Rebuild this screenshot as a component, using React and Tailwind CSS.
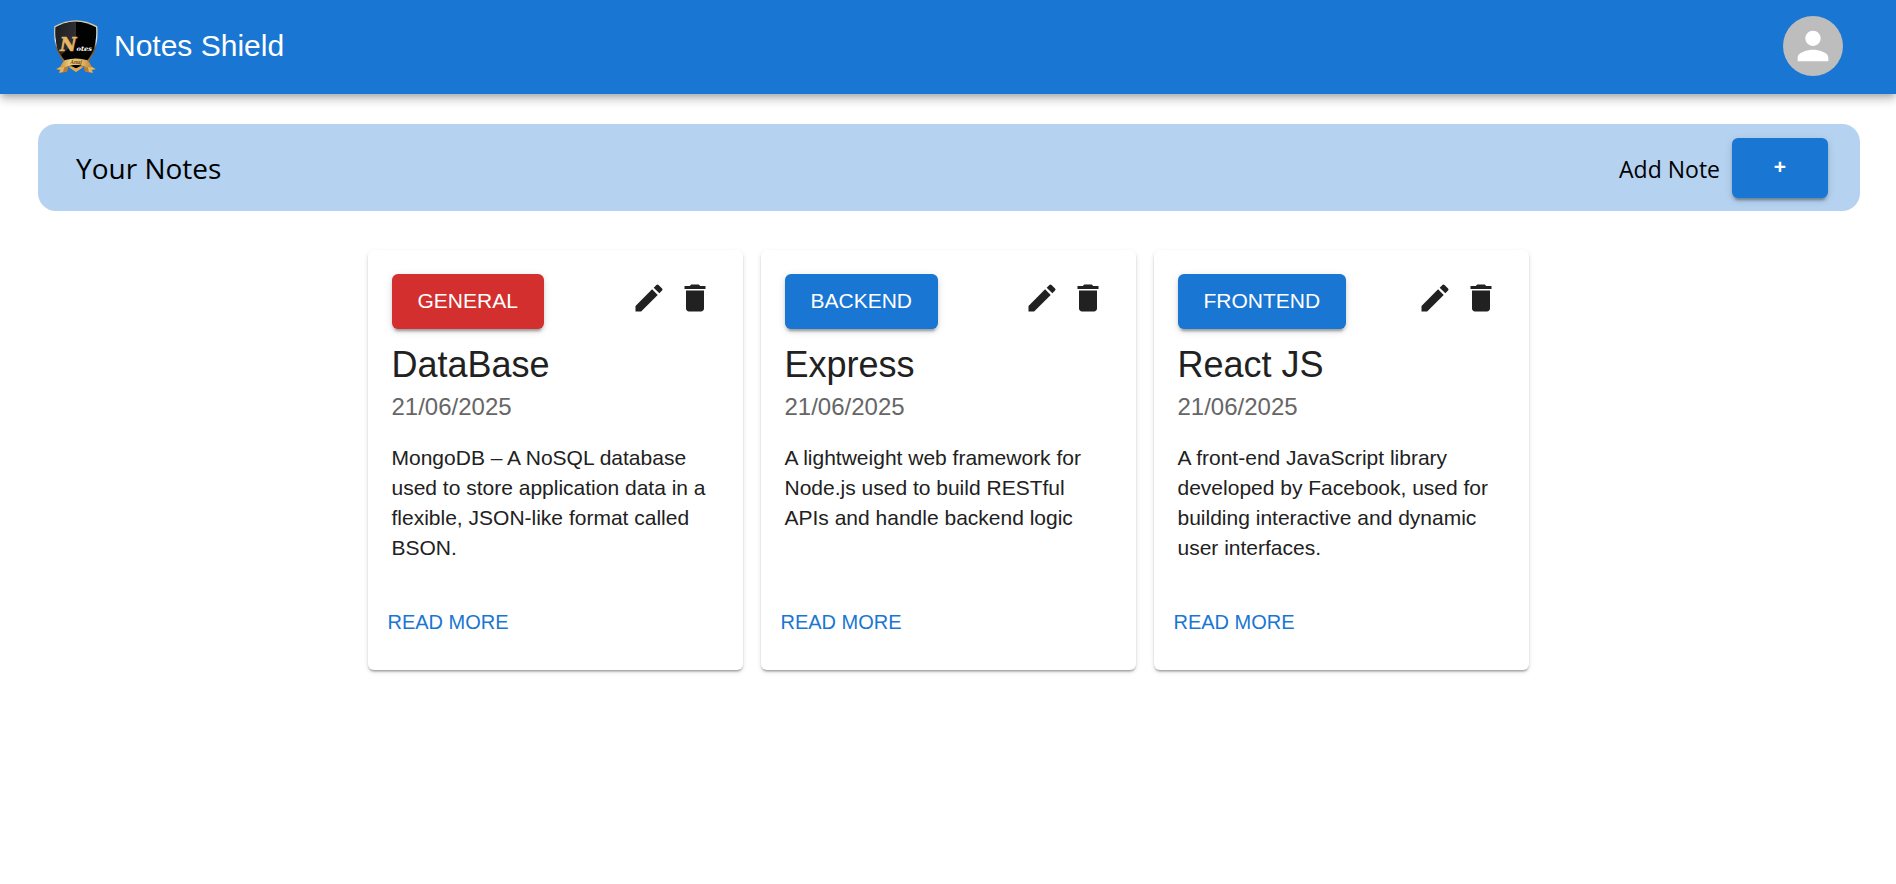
import { MdDelete, MdEdit, MdPerson } from "react-icons/md";

const notes = [
  {
    category: "GENERAL",
    color: "bg-[#d32f2f]",
    title: "DataBase",
    date: "21/06/2025",
    body: "MongoDB – A NoSQL database used to store application data in a flexible, JSON-like format called BSON.",
  },
  {
    category: "BACKEND",
    color: "bg-[#1976d2]",
    title: "Express",
    date: "21/06/2025",
    body: "A lightweight web framework for Node.js used to build RESTful APIs and handle backend logic",
  },
  {
    category: "FRONTEND",
    color: "bg-[#1976d2]",
    title: "React JS",
    date: "21/06/2025",
    body: "A front-end JavaScript library developed by Facebook, used for building interactive and dynamic user interfaces.",
  },
];

const raised =
  "rounded-md pb-[2px] text-[21px] text-white shadow-[0_5px_2px_-3px_rgba(0,0,0,0.2),0_3px_3px_0_rgba(0,0,0,0.14),0_2px_8px_0_rgba(0,0,0,0.12)]";

function Logo() {
  return (
    <svg viewBox="24 18 138 168" className="h-14 w-[46px] shrink-0" aria-hidden="true">
      <defs>
        <linearGradient id="rim" x1="0" y1="0" x2="0" y2="1">
          <stop offset="0" stopColor="#cfc6a4" />
          <stop offset="0.4" stopColor="#dfe3e2" />
          <stop offset="0.55" stopColor="#6b4a1c" />
          <stop offset="1" stopColor="#c98f3c" />
        </linearGradient>
        <linearGradient id="sheen" x1="0" y1="0" x2="1" y2="0.3">
          <stop offset="0" stopColor="#1d1d20" />
          <stop offset="1" stopColor="#303034" />
        </linearGradient>
        <linearGradient id="gold" x1="0" y1="0" x2="1" y2="0">
          <stop offset="0" stopColor="#c8923f" />
          <stop offset="0.3" stopColor="#eccb7d" />
          <stop offset="0.7" stopColor="#e3b663" />
          <stop offset="1" stopColor="#bf8636" />
        </linearGradient>
      </defs>
      <path
        d="M93 25C113 25 137 31 157 43C160 92 153 145 93 179C33 145 25 92 28 43C48 31 72 25 93 25Z"
        fill="url(#rim)"
      />
      <path
        d="M93 29C113 29 135 35 153 46C156 92 148 141 93 173C38 141 29 92 32 46C50 35 72 29 93 29Z"
        fill="#020203"
      />
      <path d="M93 29C72 29 50 35 32 46C30 82 35 108 48 130L93 90Z" fill="url(#sheen)" />
      <path d="M52 160L34 172L46 174L42 183L66 179L70 164Z" fill="#b87d31" />
      <path d="M134 160L152 172L140 174L144 183L120 179L116 164Z" fill="#b87d31" />
      <path d="M34 171L52 162L58 166L54 180L42 182L46 174Z" fill="#e2b462" />
      <path d="M152 171L134 162L128 166L132 180L144 182L140 174Z" fill="#e2b462" />
      <path d="M72 166L93 180L114 166L106 163L93 169L80 163Z" fill="#e0ad55" />
      <path d="M46 164C50 155 56 147 61 144C82 138 104 138 125 144C130 147 136 155 140 164C134 166 128 166 122 164C104 157 82 157 64 164C58 166 52 166 46 164Z" fill="url(#gold)" />
      <text x="93" y="156" textAnchor="middle" className="fill-[#6f4a17] font-['Liberation_Serif',serif] text-[17px] font-bold italic">
        Anuj
      </text>
      <text x="45" y="116" className="font-['DejaVu_Serif',serif] font-bold italic">
        <tspan strokeWidth="2" className="fill-[#e5b764] stroke-[#e5b764] text-[54px]">N</tspan>
        <tspan className="fill-white text-[20px]">otes</tspan>
      </text>
    </svg>
  );
}

function NoteCard({ note }) {
  return (
    <article className="flex min-h-[420px] w-[375px] flex-col rounded-md bg-white pb-[30px] text-[#212121] shadow-[0_3px_2px_-2px_rgba(0,0,0,0.2),0_2px_2px_0_rgba(0,0,0,0.14),0_2px_5px_0_rgba(0,0,0,0.12)]">
      <div className="px-6 pt-6">
        <div className="flex items-start justify-between">
          <button type="button" className={`h-[55px] px-[26px] ${note.color} ${raised}`}>
            {note.category}
          </button>
          <div className="flex gap-[10px] p-[6px]">
            <button type="button" aria-label={`Edit ${note.title}`}>
              <MdEdit className="size-9" />
            </button>
            <button type="button" aria-label={`Delete ${note.title}`}>
              <MdDelete className="size-9" />
            </button>
          </div>
        </div>
        <h2 className="mt-3 text-4xl leading-12">{note.title}</h2>
        <p className="text-2xl leading-9 text-[#666666]">{note.date}</p>
        <p className="mt-[18px] text-[21px] leading-[30px]">{note.body}</p>
      </div>
      <div className="mt-auto px-3">
        <button type="button" className="px-2 text-xl leading-9 text-[#1976d2]">
          READ MORE
        </button>
      </div>
    </article>
  );
}

export default function App() {
  return (
    <div className="min-h-screen bg-white font-['Liberation_Sans',Arial,sans-serif]">
      <header className="flex h-[94px] items-center justify-between bg-[#1976d2] px-[53px] pb-[2px] text-white shadow-[0_3px_6px_-2px_rgba(0,0,0,0.2),0_6px_8px_0_rgba(0,0,0,0.14),0_2px_15px_0_rgba(0,0,0,0.12)]">
        <a href="#" className="flex items-center gap-[15px]">
          <Logo />
          <span className="text-3xl">Notes Shield</span>
        </a>
        <button
          type="button"
          aria-label="Account"
          className="flex size-[60px] items-center justify-center rounded-full bg-[#bdbdbd]"
        >
          <MdPerson className="size-[46px]" />
        </button>
      </header>
      <main>
        <section className="mt-[30px] mr-9 ml-[38px] flex h-[87px] items-center justify-between rounded-[18px] bg-[#b5d2f0] pr-8 pl-[38px] font-['Open_Sans','Segoe_UI',sans-serif] text-black">
          <h1 className="text-[28px]">Your Notes</h1>
          <div className="flex items-center gap-3">
            <label htmlFor="add-note" className="pt-1 text-[23px]">
              Add Note
            </label>
            <button
              id="add-note"
              type="button"
              className={`h-[60px] w-24 bg-[#1976d2] font-['Liberation_Sans',Arial,sans-serif] font-bold ${raised}`}
            >
              +
            </button>
          </div>
        </section>
        <section className="mt-[39px] flex flex-wrap justify-center gap-[18px]">
          {notes.map((note) => (
            <NoteCard key={note.title} note={note} />
          ))}
        </section>
      </main>
    </div>
  );
}
